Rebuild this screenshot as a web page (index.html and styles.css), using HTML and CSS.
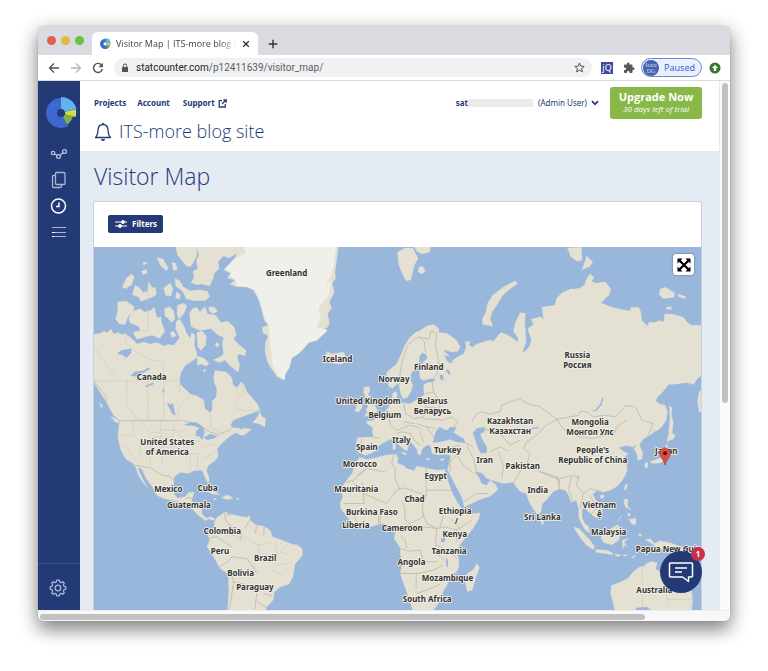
FILE: index.html
```html
<!DOCTYPE html>
<html lang="en">
<head>
<meta charset="utf-8">
<meta name="viewport" content="width=device-width, initial-scale=1">
<title>Visitor Map | ITS-more blog site</title>
<link rel="stylesheet" href="styles.css">
</head>
<body>
<div class="window">
  <div class="tabstrip">
    <div class="lights"><i class="red"></i><i class="amber"></i><i class="green"></i></div>
    <div class="tab">
      <svg class="favicon" viewBox="0 0 32 32"><circle cx="15" cy="17" r="10" fill="none" stroke="#3c68cf" stroke-width="10"/><path d="M16 1A15 15 0 0 1 31 14L20 15L16 11Z" fill="#63b2ee"/><path d="M31 14L20 16V20L29 22Z" fill="#d6dc3c"/><path d="M29 22L20 19L17 22L21 29Z" fill="#80b53c"/></svg>
      <span class="tab-title">Visitor Map | ITS-more blog site</span>
      <button class="plain" aria-label="Close tab"><svg width="8" height="8" viewBox="0 0 8 8"><path d="M1.2 1.2L6.8 6.8M6.8 1.2L1.2 6.8" stroke="#333" stroke-width="1.3"/></svg></button>
    </div>
    <button class="plain newtab" aria-label="New tab"><svg width="10" height="10" viewBox="0 0 10 10"><path d="M5 .7V9.300M.7 5H9.300" stroke="#333" stroke-width="1.4"/></svg></button>
  </div>
  <div class="toolbar">
    <button class="plain" aria-label="Back"><svg width="12" height="12" viewBox="0 0 12 12"><path d="M11 6H1.500M6 1.500L1.500 6L6 10.500" fill="none" stroke="#505357" stroke-width="1.300"/></svg></button>
    <button class="plain" aria-label="Forward"><svg width="12" height="12" viewBox="0 0 12 12"><path d="M1 6H10.500M6 1.500L10.500 6L6 10.500" fill="none" stroke="#b5b7ba" stroke-width="1.300"/></svg></button>
    <button class="plain" aria-label="Reload"><svg width="12" height="12" viewBox="0 0 12 12"><path d="M9.700 3.300A4.500 4.500 0 1 0 10.400 7" fill="none" stroke="#505357" stroke-width="1.400"/><path d="M10.900 .8V5.200H6.500Z" fill="#505357"/></svg></button>
    <div class="address">
      <svg width="8" height="10" viewBox="0 0 8 10"><rect x="1" y="4" width="6" height="5" rx=".6" fill="#505357"/><path d="M2.300 4V2.700a1.700 1.700 0 0 1 3.400 0V4" fill="none" stroke="#505357"/></svg>
      <span class="url"><b>statcounter.com</b>/p12411639/visitor_map/</span>
      <button class="plain star" aria-label="Bookmark"><svg width="11" height="11" viewBox="0 0 11 11"><path d="M5.500 1L6.800 4.100L10.200 4.400L7.600 6.600L8.400 9.900L5.500 8.100L2.600 9.900L3.400 6.600L.8 4.400L4.200 4.100Z" fill="none" stroke="#505357"/></svg></button>
    </div>
    <span class="jq">jQ</span>
    <button class="plain" aria-label="Extensions"><svg width="12" height="12" viewBox="0 0 24 24"><path d="M20.500 11H19V7a2 2 0 0 0-2-2h-4V3.500a2.500 2.500 0 0 0-5 0V5H4a2 2 0 0 0-2 2v3.800h1.500a2.700 2.700 0 0 1 0 5.400H2V20a2 2 0 0 0 2 2h3.800v-1.500a2.700 2.700 0 0 1 5.400 0V22H17a2 2 0 0 0 2-2v-4h1.500a2.500 2.500 0 0 0 0-5z" fill="#55585c"/></svg></button>
    <button class="paused"><span class="avatar"><i>Isata</i><i>DG</i></span>Paused</button>
    <button class="plain" aria-label="Update"><svg width="12" height="12" viewBox="0 0 12 12"><circle cx="6" cy="6" r="5.500" fill="#3b752f"/><path d="M6 2.600L9 6H7.200V9H4.800V6H3Z" fill="#fff"/></svg></button>
  </div>

  <div class="viewport">
    <aside class="sidebar">
      <a href="#" class="logo" aria-label="Home"><svg width="32" height="32" viewBox="0 0 32 32"><circle cx="15" cy="17" r="9.500" fill="none" stroke="#3c68cf" stroke-width="11"/><path d="M15 1A16 16 0 0 1 30.500 13L19 15.500A4.200 4.200 0 0 0 15 12.800Z" fill="#63b2ee"/><path d="M30 13.500L19.200 15.800V18.500L29.500 21A15 15 0 0 0 30 13.500Z" fill="#d6dc3c"/><path d="M26.500 20.500L19 18.700L17.300 21L21 28.500A13 13 0 0 0 26.500 20.500Z" fill="#80b53c"/><path d="M27 20.800L31 21.500L30 26L22 30L21.300 28.500A13 13 0 0 0 27 20.800Z" fill="#233a77"/></svg></a>
      <nav class="side-nav">
        <a href="#" aria-label="Stats"><svg width="18" height="18" viewBox="0 0 18 18" fill="none" stroke="#bcc7df" stroke-width="1.200"><circle cx="3" cy="8" r="1.700"/><circle cx="8.500" cy="11.500" r="1.900"/><circle cx="14.500" cy="6.500" r="1.900"/><path d="M4.500 8.800L6.800 10.300M10 10.200L13 7.700"/></svg></a>
        <a href="#" aria-label="Pages"><svg width="18" height="18" viewBox="0 0 18 18" fill="none" stroke="#a9b6d4" stroke-width="1.300"><rect x="5.500" y="1.500" width="9.500" height="12" rx="1"/><path d="M5.500 4.500H3.500A1 1 0 0 0 2.500 5.500V15.500A1 1 0 0 0 3.500 16.500H10.500A1 1 0 0 0 11.500 15.500V13.500"/></svg></a>
        <a href="#" aria-label="Recent"><svg width="18" height="18" viewBox="0 0 18 18" fill="none" stroke="#fff" stroke-width="1.500"><circle cx="8.500" cy="9" r="7"/><path d="M9 5.500V9.500H6"/></svg></a>
        <a href="#" aria-label="List"><svg width="18" height="18" viewBox="0 0 18 18" stroke="#a9b6d4"><path d="M2 4.500H16M2 9.500H16M2 13.500H16"/><path d="M2 9.500H5M2 13.500H4" stroke="#fff"/></svg></a>
      </nav>
      <a href="#" class="settings" aria-label="Settings"><svg width="18" height="18" viewBox="0 0 18 18" fill="none" stroke="#a9b6d4" stroke-width="1.300"><circle cx="9" cy="9" r="2.800"/><path d="M7.800 1.200H10.200L10.700 3L12.200 3.600L13.800 2.700L15.300 4.200L14.400 5.800L15 7.300L16.800 7.800V10.200L15 10.700L14.400 12.200L15.300 13.800L13.800 15.300L12.200 14.400L10.700 15L10.200 16.800H7.800L7.300 15L5.800 14.400L4.200 15.300L2.700 13.800L3.600 12.200L3 10.700L1.200 10.200V7.800L3 7.300L3.600 5.800L2.700 4.200L4.200 2.700L5.800 3.600L7.300 3Z" stroke-linejoin="round"/></svg></a>
    </aside>

    <main class="page">
      <header class="header">
        <div class="topline">
          <nav class="links">
            <a href="#">Projects</a><a href="#">Account</a>
            <a href="#" class="support">Support <svg width="9" height="9" viewBox="0 0 9 9" fill="none" stroke="#233a77" stroke-width="1.300"><path d="M4 1.700H1.200V8H7.300V5M5.300 .9H8.200V3.800M8 1L4 5"/></svg></a>
          </nav>
          <button class="plain user"><b>sat</b><span class="mask"></span>(Admin User)<svg width="8" height="6" viewBox="0 0 8 6"><path d="M1 1.200L4 4.300L7 1.200" fill="none" stroke="#233a77" stroke-width="1.800"/></svg></button>
          <a href="#" class="upgrade"><b>Upgrade Now</b><i>30 days left of trial</i></a>
        </div>
        <div class="site">
          <svg width="18" height="20" viewBox="0 0 18 20"><path d="M1.500 15.500C3.500 13.500 3.800 11 4 8C4.200 4.500 6.200 2.500 9 2.500S13.800 4.500 14 8C14.200 11 14.500 13.500 16.500 15.500Z" fill="none" stroke="#233a77" stroke-width="1.300" stroke-linejoin="round"/><path d="M7 17H11A2 2 0 0 1 7 17Z" fill="#233a77"/><path d="M9 .8V2.500" stroke="#233a77" stroke-width="1.500"/></svg>
          <span>ITS-more blog site</span>
        </div>
      </header>
      <section class="content">
        <h1>Visitor Map</h1>
        <div class="card">
          <div class="card-bar">
            <button class="filters"><svg width="14" height="10" viewBox="0 0 14 10" stroke="#fff"><path d="M1 3H13M1 7H13"/><circle cx="9" cy="3" r="1.500" fill="#fff"/><circle cx="6" cy="7" r="1.500" fill="#fff"/></svg>Filters</button>
          </div>
          <div class="map">
            <svg class="world" viewBox="11 5 1822 1090" role="img" aria-label="World map of visitors">
              <g class="land">
                <!-- Arctic Canada -->
                <path d="M10 268L30 264L40 258L50 262L62 252L70 266L82 262L95 268L104 264L118 275L130 285L140 296L160 290L180 296L200 292L220 302L235 298L252 300L258 290L268 278L256 250L258 228L268 222L280 240L288 262L300 280L304 262L314 270L312 300L320 325L318 338L300 352L285 360L272 382L268 400L270 418L285 432L300 446L320 452L340 464L344 490L358 502L366 494L366 468L378 455L380 430L372 412L370 395L374 376L390 378L408 380L424 396L428 418L440 428L452 410L460 416L470 440L490 462L506 484L508 496L490 502L462 512L440 520L428 526L420 540L430 548L446 548L455 557H85L86 540L90 528L70 510L58 490L48 470L36 452L26 436L10 410Z"/>
                <path d="M256 4H318L320 30L310 50L300 64L288 62L275 45L262 30ZM318 4H448L440 24L416 38L400 32L384 48L386 70L372 84L368 100L358 122L335 116L320 118L302 112L312 96L308 78L322 70L318 45L326 30ZM200 36L218 42L234 68L228 76L210 60ZM244 52L256 54L262 72L250 76ZM154 78L168 72L170 84L158 88ZM158 52L166 50L170 54L160 60ZM96 125L108 98L124 86L132 96L124 118L106 130ZM126 148L134 120L148 128L160 142L172 136L176 110L184 126L196 128L198 148L180 158L152 168L144 154ZM220 128L240 114L248 130L242 152L226 150ZM254 100L268 106L280 126L300 136L330 134L352 138L358 154L344 166L310 166L288 160L276 136L256 122ZM258 140L270 148L268 162L256 158ZM82 170L108 168L132 184L128 202L114 212L104 238L88 236L76 222L82 196ZM116 216L132 196L150 190L162 200L180 196L192 186L200 218L212 214L214 232L224 258L208 280L186 270L168 274L140 282L128 262L150 256L146 244L118 232ZM222 190L238 184L250 196L254 222L244 232L232 218L224 212ZM262 180L280 174L290 182L280 206L266 222L260 206ZM240 262L250 258L258 272L244 276Z"/>
                <path d="M298 204L306 190L320 186L328 200L344 184L352 206L376 210L392 232L412 228L432 246L438 268L430 282L448 300L468 316L464 332L448 326L440 332L448 360L444 380L420 362L404 344L388 352L368 344L388 336L400 326L396 296L400 276L384 270L362 250L330 256L302 244ZM356 184L372 186L382 198L368 206L356 196ZM320 262L336 258L348 272L346 300L332 316L322 304ZM320 332L340 338L356 354L350 362L330 356L322 362ZM374 296L382 292L388 300L380 306ZM338 374L346 372L344 382ZM488 532L504 512L508 498L514 514L526 520L524 546L508 536ZM436 562L462 548L484 552L452 570ZM28 474L36 478L34 490ZM62 514L80 522L90 534L74 530Z"/>
                <!-- Greenland -->
                <path d="M448 4H744L740 40L734 80L736 100L726 112L732 140L718 170L724 188L712 205L718 235L710 248L702 250L710 256L680 285L655 292L640 310L625 325L604 338L598 365L586 385L582 404L560 394L545 372L532 350L524 318L526 290L534 272L518 262L516 246L534 240L522 225L516 200L506 165L490 135L470 125L440 124L418 116L436 104L412 98L420 84L402 74L436 34Z"/>
                <path class="ice" d="M460 4H738L730 60L722 90L706 120L722 106L716 150L696 172L684 190L692 212L678 245L712 256L680 285L655 292L640 310L625 325L604 338L598 365L586 385L582 404L564 392L548 360L540 300L536 240L524 215L508 165L492 132L470 125L440 122L436 104L418 92L424 82L402 72L440 36L466 24Z"/>
              </g>
              <!-- Northern Europe -->
              <g class="land" transform="translate(600 0)">
                <path d="M250 557L246 545L230 535L228 528L250 526L256 518L270 510L285 498L296 486L298 476L308 470L306 446L316 438L322 446L318 462L326 474L340 472L358 476L376 466L384 460L402 450L400 420L412 412L430 410L436 402L420 400L400 406L390 400L388 380L392 366L400 350L412 338L408 326L396 322L388 334L386 350L376 372L362 385L362 405L368 420L362 440L350 458L338 460L330 440L328 424L322 414L308 428L296 424L288 400L290 380L300 372L318 358L332 330L344 300L360 276L376 262L390 256L410 242L430 238L446 250L446 262L470 264L500 286L510 304L504 318L484 320L466 314L462 318L476 330L486 348L494 340L508 332L520 326L528 306L526 290L540 288L536 300L548 306L560 296L580 290L601 284V557Z"/>
                <path d="M222 426L236 424L240 436L234 446L244 462L254 480L262 494L258 504L236 512L222 514L232 500L226 494L234 484L226 470L228 460L220 440ZM200 478L214 470L216 486L206 500L194 498ZM106 330L112 318L124 326L140 324L160 320L166 334L178 338L176 346L150 358L130 354L108 348ZM322 20L345 8H368L384 40L372 60L362 104L348 106L336 84L326 60ZM386 66L396 62L406 76L396 86L384 80ZM372 4H422L418 20L396 26L380 18ZM578 238L576 222L588 200L592 175L608 150L640 125L676 106L682 116L660 130L636 152L620 180L606 200L600 220L608 242L590 240Z"/>
              </g>
              <!-- Russia -->
              <g class="land" transform="translate(1200 0)">
                <path d="M-1 284L10 288L32 262L50 268L70 280L82 290L84 278L70 258L76 232L90 202L106 204L104 230L106 260L108 290L96 322L108 316L120 300L124 280L116 262L114 250L130 238L124 222L150 214L160 222L156 186L194 180L200 158L216 142L244 130L250 132L270 128L284 118L288 104L300 86L312 96L304 108L318 114L346 110L362 130L358 148L332 172L356 182L376 188L400 194L422 196V186H446L452 200L456 226L472 242L478 230L496 232L506 226L522 230L524 206L546 206L580 216L592 232L604 240H636V388L620 402L612 418L590 412L560 416L536 418L518 440L504 454L496 466L508 476L526 480L532 500L528 525L515 545L500 557H-1Z"/>
                <path d="M232 8L274 6L276 44L262 48L242 34ZM290 32L308 50L300 62L276 74L284 50ZM510 132L526 126L554 142L552 156L520 160L508 148ZM564 146L588 154L584 160L566 154ZM528 186L542 184L546 192L530 192ZM636 430L628 440L622 468L628 500L636 500ZM538 480L546 488L544 510L550 530L546 566L536 560L540 520Z"/>
              </g>
              <!-- The Americas -->
              <g class="land" transform="translate(0 555)">
                <path d="M85 -1L82 20L92 60L108 88L124 96L134 108L146 138L160 160L172 174L162 156L150 132L142 112L154 116L168 146L188 172L200 196L222 206L246 210L270 216L296 224L310 240L322 254L336 264L346 272L356 266L370 272L374 266L362 260L350 264L338 256L334 248L336 224L330 218L308 216L304 210L312 186L296 186L284 200L262 204L252 192L248 170L252 140L270 126L294 130L310 122L336 120L342 136L350 154L356 156L356 140L348 120L354 106L376 90L384 76L380 56L394 40L414 22L424 14L450 0L456 -1Z"/>
                <path d="M372 276L380 262L400 248L412 246L410 256L420 252L440 256L470 262L478 256L480 270L496 284L520 288L540 300L546 320L570 328L600 340L622 345L636 356L637 375L614 402L608 440L596 462L570 470L552 486L548 510L530 530L524 545H412L416 480L414 440L412 430L390 416L376 390L358 360L350 350L358 330L354 318L362 300L372 290Z"/>
                <path d="M320 178L340 172L366 180L388 194L368 192L346 182ZM394 202L412 194L428 204L410 208ZM370 205H378V209H370ZM438 204H446V208H438ZM440 10L480 0L460 16Z"/>
              </g>
              <!-- Southern Europe, Middle East and Africa -->
              <g class="land" transform="translate(600 555)">
                <path d="M246 -1L250 20L202 22L198 40L204 66L216 70L226 76L250 66L264 48L282 36L300 28L316 26L326 44L340 56L350 62L356 52L344 38L336 20L340 14L354 28L370 44L380 56L384 74L392 72L396 56L408 46L420 44L426 70L444 74L468 72L480 76L478 96L472 118L478 130L488 150L504 180L518 208L522 230L540 222L570 208L600 198L624 178L616 162L600 150L590 166L574 160L566 140L552 124L575 128L590 145L602 148V-1Z"/>
                <path d="M208 82L230 88L260 82L290 74L318 72L324 86L320 98L340 106L352 116L372 122L380 108L400 112L440 120L464 118L468 135L478 165L490 195L504 220L520 244L540 252L570 248L566 266L548 296L520 330L508 346L500 362L506 390V410L500 424L476 440L472 462L458 486L450 510L438 530L424 545H370L358 510L344 470L330 430L336 400L330 366V352L312 326L316 304L306 290L282 280L266 282L242 290L214 292L190 284L172 262L152 236L150 220L158 200L150 180L166 154L186 130L196 100ZM524 450L532 430L550 418L560 400L568 412L558 440L546 480L532 484ZM406 84L422 86L410 90ZM448 88L464 84L456 92ZM332 66L348 68L346 75ZM308 42H316V58H308Z"/>
              </g>
              <!-- Asia and Oceania -->
              <g class="land" transform="translate(1200 555)">
                <path d="M-1 -1H500L480 15L460 26L448 44L458 66L456 86L444 90L440 68L430 56L440 40L430 50L408 46L386 52L400 64L414 70L400 84L410 104L412 120L400 146L382 168L360 180L338 186L320 182L308 192L318 212L334 230L338 250L320 264L308 256L290 240L284 228L276 240V262L284 280L296 290L300 308L286 300L274 280L266 262V236L258 210L244 218L236 196L226 180L208 176L190 184L172 206L156 222L152 246L142 252L130 238L118 216L108 190L90 184L78 170L70 156L40 160L-1 148Z"/>
                <path d="M538 6L556 14L550 26L530 34ZM530 40L536 60L530 86L510 98L486 100L480 94L510 84L524 60ZM464 100L474 96L472 114L464 110ZM330 196L342 194L340 204L332 204ZM408 160L412 166L406 182L402 174ZM152 268L160 272V282H154ZM250 290L268 296L300 330L314 350L310 358L290 346L266 316ZM316 358L350 360L370 370L366 374L318 366ZM376 372L390 374V378H376ZM396 374L412 374L408 378ZM424 382L438 374L430 384ZM332 322L350 306L370 290L384 284L392 300L386 330L366 344L342 338ZM396 330L416 324L402 336L414 352L404 344L398 356ZM404 206L414 208L412 228L424 240L408 232L402 220ZM416 268L438 264V282H426ZM394 256L382 272L392 262ZM412 248L422 252L416 260ZM446 312H454V318H446ZM466 328L482 326L492 340L510 332L540 338L580 352L620 372L636 390L600 380L560 370L520 360L490 344ZM376 545L362 490L364 466L390 456L414 444L430 424L450 410L462 408L470 400L484 394L502 398L496 416L520 432L540 424L548 400L560 420L580 450L604 480L608 510L604 545H490L470 530L440 532L430 545Z"/>
              </g>
              <!-- Lakes and inland seas -->
              <g class="water">
                <path d="M80 325L95 314L122 310L124 322L108 338L98 330ZM120 392L132 380L160 376L176 366L178 372L156 384L140 394ZM164 422L188 412L192 416L166 426ZM230 472L240 478L248 474L256 510L246 506L234 482ZM216 434L224 430L218 448ZM280 540L300 530L320 532L342 548L340 556L312 542ZM316 572L318 556L330 548L344 560L336 584L328 574ZM340 576L360 566L382 572L372 580L350 584Z"/>
                <path d="M1048 388L1060 390V406L1050 402ZM1066 374L1074 372L1082 384L1076 388ZM1062 330L1078 334L1088 352L1074 352ZM1500 498L1516 494L1532 474L1536 456L1540 462L1534 480L1518 498ZM1316 549L1346 545V549L1318 553Z"/>
                <path d="M1028 590L1036 560L1048 545L1070 556L1080 545L1100 547L1090 562L1120 580L1126 593L1100 590L1080 583L1050 590L1032 592ZM1148 563L1160 549L1184 545L1182 560L1170 567L1178 585L1190 605V623L1172 625L1162 605L1156 585ZM1052 880L1066 878L1064 890L1054 892ZM1068 934L1074 950L1072 968L1068 962Z"/>
              </g>
              <!-- Province and state lines -->
              <g class="states">
                <path d="M172 60V256H106V292L140 322L180 344L220 350V525M12 407H268M110 407V480L142 524M172 407V525M268 407V440M300 448L264 488V526M361 500V545L392 562M452 410L460 440L440 466L436 490L460 496H506M12 310L24 318L42 352L64 378L88 406"/>
                <path d="M86 570H130L128 528M130 570L150 590V640M150 528L180 562H210M210 528V610M188 575H250M250 530V570M210 555H250L275 560M170 590H230M180 590V665M216 590V655M216 605H265M265 560L280 590L290 620M290 590L310 586L330 590M275 625H330M300 625V675M322 625V672M335 610L370 590M340 640L372 620M355 600L380 598M104 600L145 652"/>
                <path d="M424 870L470 878L500 900L540 895M500 890L510 930L490 960L510 990M555 890L562 930L545 950M590 900L570 920L600 930M560 960L595 955M545 975L575 990L600 965M485 855L510 870L530 865"/>
                <path d="M1657 960V1095M1731 990V1080M1731 1063H1806"/>
              </g>
              <!-- Country borders -->
              <g class="borders">
                <path d="M12 408L24 424L34 438L46 452L48 470M90 526H266L268 524L300 532L340 548L358 560L384 568L416 556L432 540M132 660L180 668L214 690L240 694L252 708M286 760L300 756L310 766M316 790L334 788M402 805L408 830L425 845L455 860L450 885M478 826L464 850M500 840L495 865M522 845L520 870M355 880L380 874L410 895L424 905M425 935L412 950L384 968M424 935L470 940L500 985M420 975L430 1010L418 1092M430 1010L466 1018L500 1040L494 1092M520 1045L545 1052M500 1070L530 1088"/>
                <path d="M928 420L930 380L938 340L952 300L972 282L988 276L1002 288L1006 320M990 276L1016 282L1022 258L1040 264L1036 300L1048 360L1040 385L1028 402M1026 410L1030 440L1004 446M1030 440L1050 470L1048 490L1010 486M940 472L946 505L970 520L1000 516L1008 480M896 510L900 540L920 555L960 540L990 548M940 530L975 535M1000 520L1060 525L1085 515L1104 530L1085 552M980 535L1010 545L1038 550M850 575L870 580M814 582L812 615M920 565L935 560L960 565M960 565L976 590L990 600M990 560L1000 590M1010 545L1030 575"/>
                <path d="M910 630L905 655L916 670L914 700L930 735M886 680L830 670L800 690M830 670L790 705L750 715M786 708L820 745L890 775L920 735L940 728L1008 750V665M1008 735H1085M816 710L822 775H760M1008 750L996 785L1000 815L960 835L945 825L944 790L936 770M996 800L1010 835L1040 850L1064 845L1100 855L1145 825M1060 810L1050 845M930 860L950 840L1000 845L1040 850L1036 890L1040 925L1062 945M930 910L955 918L990 915L1000 950L1040 950M930 985H985L1030 975L1058 960M978 1030V985M980 1045L1010 1035L1050 1018M1040 900L1070 915L1100 940M770 815V840M790 810L805 840M810 800L840 795L865 810V838M870 835V800M1082 820L1110 850M930 870L945 885L950 910M1100 855V890"/>
                <path d="M1080 650L1100 628L1120 660L1150 685M1130 600L1150 640L1160 680M1120 590L1150 605M1080 630V680M1110 600L1080 608M1122 770L1160 745L1195 745M1200 620L1230 605L1255 618M1180 550L1230 565L1260 600L1290 585M1225 620L1240 660L1235 700"/>
                <path d="M1145 530L1160 505L1178 500L1196 506L1230 500L1235 480L1260 470L1290 460L1300 468L1325 480L1345 482L1365 495L1400 522L1385 530L1362 545L1340 570L1310 590L1300 610L1320 625L1312 650L1350 680L1380 688L1410 700L1450 690L1470 700M1400 522L1440 515L1465 510L1470 498L1490 500L1510 515L1545 510L1575 515L1590 500L1605 482L1628 482L1640 490L1655 525L1690 535L1670 580M1400 522L1415 545L1430 560L1470 575L1510 580L1575 560L1580 545L1610 525M1270 715L1300 660L1320 650M1350 680L1408 704V725M1400 690L1410 740M1445 695L1435 730L1450 775M1465 690L1460 720L1480 745L1470 790M1480 745L1500 730L1535 740M1500 750L1520 790L1500 810M1640 600L1625 620M1580 850L1575 838M1733 900V930"/>
              </g>
              <g class="labels">
                <text x="589" y="93">Greenland</text><text x="184" y="403">Canada</text><text x="742" y="349">Iceland</text><text x="1016" y="373">Finland</text><text x="911" y="410">Norway</text><text x="834" y="477">United Kingdom</text><text x="1027" y="475">Belarus</text><text x="1027" y="505">Беларусь</text><text x="884" y="518">Belgium</text>
                <text x="1462" y="339">Russia</text><text x="1462" y="368">Россия</text><text x="1260" y="536">Kazakhstan</text><text x="1260" y="565">Казахстан</text><text x="1500" y="540">Mongolia</text><text x="1500" y="569">Монгол Улс</text>
                <text x="231" y="600">United States</text><text x="231" y="630">of America</text><text x="234" y="741">Mexico</text><text x="352" y="738">Cuba</text><text x="296" y="787">Guatemala</text><text x="396" y="866">Colombia</text><text x="389" y="928">Peru</text><text x="525" y="949">Brazil</text><text x="451" y="992">Bolivia</text><text x="494" y="1034">Paraguay</text>
                <text x="934" y="592">Italy</text><text x="830" y="613">Spain</text><text x="1072" y="622">Turkey</text><text x="1184" y="653">Iran</text><text x="809" y="666">Morocco</text><text x="1037" y="701">Egypt</text><text x="798" y="741">Mauritania</text><text x="973" y="771">Chad</text><text x="845" y="809">Burkina Faso</text><text x="1095" y="806">Ethiopia</text><text x="1099" y="836">/</text><text x="797" y="849">Liberia</text><text x="936" y="857">Cameroon</text><text x="1094" y="876">Kenya</text><text x="1077" y="926">Tanzania</text><text x="964" y="959">Angola</text><text x="1072" y="1007">Mozambique</text><text x="1011" y="1072">South Africa</text>
                <text x="1508" y="623">People's</text><text x="1508" y="653">Republic of China</text><text x="1729" y="626">Japan</text><text x="1298" y="672">Pakistan</text><text x="1343" y="742">India</text><text x="1528" y="787">Vietnam</text><text x="1528" y="816">ệ</text><text x="1357" y="825">Sri Lanka</text><text x="1556" y="870">Malaysia</text><text x="1750" y="920">Papua New Guinea</text><text x="1693" y="1044">Australia</text>
              </g>
              <!-- Visitor pin -->
              <path d="M1725 660C1722 642 1709 638 1709 624A16 16 0 0 1 1741 624C1741 638 1728 642 1725 660Z" fill="#dc4d3d" stroke="#b53c2f" stroke-width="2"/><circle cx="1725" cy="624" r="6" fill="#4b120c"/>
            </svg>
            <button class="expand" aria-label="Full screen"><svg width="14" height="14" viewBox="0 0 14 14"><path d="M.5 .5H5.500L.5 5.500ZM13.500 .5V5.500L8.500 .5ZM.5 13.500V8.500L5.500 13.500ZM13.500 13.500H8.500L13.500 8.500Z"/><path d="M2 2L12 12M12 2L2 12" stroke="#000" stroke-width="2.200"/></svg></button>
          </div>
        </div>
      </section>
      <button class="chat" aria-label="Open chat"><svg width="26" height="22" viewBox="0 0 26 22" fill="none" stroke="#fff" stroke-width="1.500" stroke-linejoin="round"><path d="M2.500 2H23.500A1 1 0 0 1 24.500 3V15A1 1 0 0 1 23.500 16H20.500V20.500L14.500 16H2.500A1 1 0 0 1 1.500 15V3A1 1 0 0 1 2.500 2Z"/><path d="M7 7H19M7 11H14"/></svg><span class="badge">1</span></button>
    </main>
    <div class="vscroll"><i></i></div>
  </div>
  <div class="hscroll"><i></i></div>
</div>
</body>
</html>
```
FILE: styles.css
```css
* { box-sizing: border-box; }
body {
  margin: 0;
  padding: 26px 38px 51px;
  background: #fff;
  color: #233a77;
  font: 8px/12px "Noto Sans", sans-serif;
}
a { color: inherit; text-decoration: none; }
button { font: inherit; color: inherit; border: 0; cursor: pointer; }
svg { display: block; flex: none; }
.plain { background: none; padding: 0; display: flex; align-items: center; }

.window {
  border-radius: 5px;
  overflow: hidden;
  background: #f8f8f8;
  box-shadow: 0 0 1px rgba(0,0,0,.4), 0 9px 18px rgba(0,0,0,.42), 0 2px 22px rgba(0,0,0,.14);
}

/* Browser chrome */
.tabstrip { display: flex; height: 29px; background: #dadbe0; padding-left: 9px; }
.lights { display: flex; gap: 5px; align-items: center; width: 45px; }
.lights i { width: 9px; height: 9px; border-radius: 50%; }
.red { background: #e2604f; }
.amber { background: #eab63b; }
.green { background: #69c244; }
.tab {
  display: flex; align-items: center; gap: 5px;
  width: 166px; margin-top: 6px; padding: 0 8px;
  border-radius: 6px 6px 0 0; background: #fff;
}
.favicon { width: 11px; height: 11px; }
.tab-title {
  flex: 1; overflow: hidden; white-space: nowrap;
  font: 9px/12px "Open Sans", sans-serif; color: #444;
  mask-image: linear-gradient(90deg, #000 86%, transparent);
}
.newtab { margin: 6px 0 0 10px; }
.toolbar {
  display: flex; align-items: center; gap: 10px;
  height: 26px; padding: 0 9px 0 10px;
  background: #fff; border-bottom: 1px solid #dcdcde;
}
.address {
  flex: 1; display: flex; align-items: center; gap: 7px;
  height: 19px; padding: 0 7px; margin-right: -1px;
  border-radius: 10px; background: #f0f1f3;
}
.url { flex: 1; font: 10px/12px Roboto, sans-serif; color: #5c5f63; }
.url b { font-weight: 400; color: #222; }
.jq {
  width: 12px; height: 12px; background: #3c4a9f; color: #fff;
  font-size: 9px; text-align: center;
}
.paused {
  display: flex; align-items: center; gap: 5px;
  height: 19px; padding: 0 6px 0 1px; margin: 0 -3px 0 -4px;
  border: 1px solid #6a89dc; border-radius: 10px;
  background: #e9effb; color: #3c62cc; font-size: 9px;
}
.avatar {
  display: flex; flex-direction: column; align-items: center; justify-content: center;
  width: 16px; height: 16px; border-radius: 50%; overflow: hidden;
  background: #4661ae; color: #d5ddf3;
}
.avatar i { font: 6px/6px "Liberation Serif", serif; }

/* Site */
.viewport { display: flex; }
.sidebar { display: flex; flex-direction: column; width: 42px; background: #233a77; }
.logo { padding: 15px 0 0 8px; }
.side-nav { display: flex; flex-direction: column; gap: 8px; padding: 17px 0 0 12px; flex: 1; }
.settings { padding: 15px 0 13px 11px; border-top: 1px solid #41568e; }
.page { position: relative; flex: 1; min-width: 0; background: #e5ebf3; }
.header { background: #fff; padding: 6px 17px 7px 14px; }
.topline { display: flex; align-items: center; height: 32px; }
.links { display: flex; gap: 11px; flex: 1; font-weight: 700; }
.support { display: flex; gap: 3px; align-items: center; margin-left: 2px; }
.user { margin-right: 11px; }
.mask { width: 65px; height: 8px; margin: 0 5px 0 0; background: #ebebeb; }
.user svg { margin-left: 4px; }
.upgrade {
  display: flex; flex-direction: column; align-items: center;
  width: 92px; padding: 4px 0; border-radius: 3px;
  background: #88b848; color: #fff; font-family: "Open Sans", sans-serif;
}
.upgrade b { font-size: 11px; }
.upgrade i { font-size: 8px; font-weight: 500; }
.site { display: flex; align-items: center; gap: 7px; height: 25px; font: 300 18px/25px "Open Sans", sans-serif; }
.content { padding: 9px 17px 0 13px; }
h1 { margin: 0 0 8px 1px; font: 300 23px/33px "Open Sans", sans-serif; }
.card { border: 1px solid #c6d0e0; border-bottom: 0; border-radius: 3px 3px 0 0; background: #fff; }
.card-bar { padding: 13px 14px 14px; }
.filters {
  display: flex; align-items: center; gap: 4px;
  height: 18px; padding: 0 6px; border-radius: 2px;
  background: #233a77; color: #fff; font-weight: 700;
}
.map { position: relative; }
.world { width: 100%; height: auto; background: #99b6db; }
.land { fill: #e4e1d2; stroke: #dedfd6; stroke-width: 1; stroke-linejoin: round; }
.ice { fill: #f0f0ea; stroke: none; }
.water { fill: #99b6db; }
.states, .borders { fill: none; stroke-width: 2; stroke-linejoin: round; }
.states { stroke: #c5c4bf; stroke-dasharray: 5 2; }
.borders { stroke: #b2b0a6; }
.labels {
  font: 700 24px "Noto Sans", sans-serif; fill: #333; text-anchor: middle;
  paint-order: stroke; stroke: #f3f2ec; stroke-width: 5; stroke-linejoin: round;
}
.expand {
  position: absolute; top: 7px; right: 7px;
  display: grid; place-items: center;
  width: 21px; height: 21px; padding: 0; border-radius: 3px;
  background: #fff; box-shadow: 0 0 2px rgba(0,0,0,.5);
}
.chat {
  position: absolute; right: 17px; bottom: 17px;
  display: grid; place-items: center;
  width: 42px; height: 42px; padding: 0; border-radius: 50%; background: #233a77;
}
.badge {
  position: absolute; top: -4px; right: -3px;
  width: 14px; height: 14px; border-radius: 50%;
  background: #ca304a; color: #fff; font-weight: 700; line-height: 14px;
}
.vscroll { width: 11px; padding: 2px; background: #fafafa; border-left: 1px solid #e8e8e8; }
.vscroll i { display: block; width: 6px; height: 61%; border-radius: 3px; background: #c1c1c1; }
.hscroll { height: 11px; padding: 3px 2px 2px; border-top: 1px solid #eee; }
.hscroll i { display: block; width: 88%; height: 6px; border-radius: 3px; background: #c1c1c1; }
```
